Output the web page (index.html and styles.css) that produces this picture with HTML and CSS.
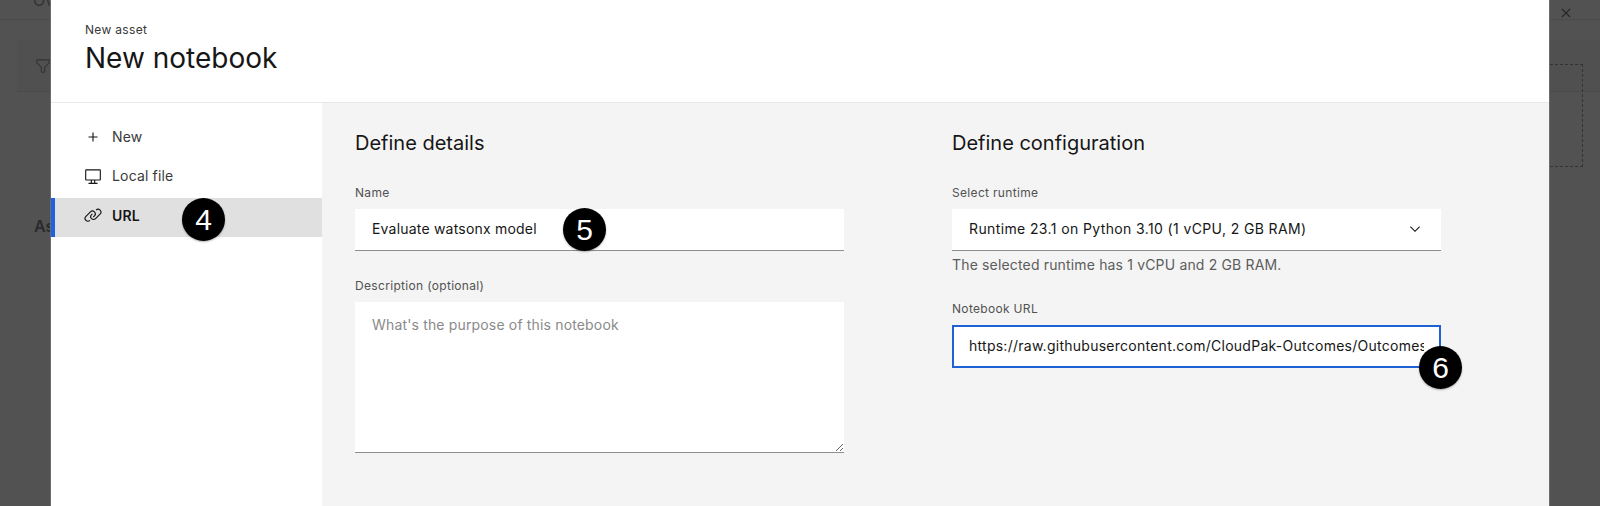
FILE: index.html
```html
<!DOCTYPE html>
<html lang="en">
<head>
<meta charset="utf-8">
<title>New notebook</title>
<link rel="stylesheet" href="styles.css">
</head>
<body>
<div class="backdrop">
  <div class="bg-tabs"><span class="bg-tab">Overview</span></div>
  <div class="bg-filter">
    <svg class="bg-filter-icon" viewBox="0 0 32 32" width="18" height="18"><path d="M18 28h-4a2 2 0 0 1-2-2v-7.59L4.59 11A2 2 0 0 1 4 9.59V6a2 2 0 0 1 2-2h20a2 2 0 0 1 2 2v3.59a2 2 0 0 1-.59 1.41L20 18.41V26a2 2 0 0 1-2 2zM6 6v3.59l8 8V26h4v-8.41l8-8V6z"/></svg>
  </div>
  <div class="bg-heading">Assets</div>
  <div class="bg-drop"></div>
  <svg class="bg-close" viewBox="0 0 32 32" width="18" height="18"><path d="M24 9.4L22.6 8 16 14.6 9.4 8 8 9.4l6.6 6.6L8 22.6 9.4 24l6.6-6.6 6.6 6.6 1.4-1.4-6.6-6.6z"/></svg>
</div>
<main class="modal">
  <header class="modal-head">
    <p class="eyebrow">New asset</p>
    <h1 class="title">New notebook</h1>
  </header>
  <div class="modal-body">
    <nav class="side">
      <a class="side-item">
        <svg class="side-icon" viewBox="0 0 32 32" width="18" height="18"><path d="M17 15V8h-2v7H8v2h7v7h2v-7h7v-2z"/></svg>
        <span>New</span>
      </a>
      <a class="side-item">
        <svg class="side-icon" viewBox="0 0 32 32" width="18" height="18"><path d="M28 4H4a2 2 0 0 0-2 2v16a2 2 0 0 0 2 2h8v4H8v2h16v-2h-4v-4h8a2 2 0 0 0 2-2V6a2 2 0 0 0-2-2zM18 28h-4v-4h4zm10-6H4V6h24z"/></svg>
        <span>Local file</span>
      </a>
      <a class="side-item is-active">
        <svg class="side-icon" viewBox="0 0 32 32" width="18" height="18"><path d="M29.25 6.76a6 6 0 0 0-8.5 0l1.42 1.42a4 4 0 1 1 5.67 5.67l-8 8a4 4 0 1 1-5.67-5.66l1.41-1.42-1.41-1.42-1.42 1.42a6 6 0 0 0 0 8.5A6 6 0 0 0 17 25a6 6 0 0 0 4.27-1.76l8-8a6 6 0 0 0-.02-8.48z"/><path d="M4.19 24.82a4 4 0 0 1 0-5.67l8-8a4 4 0 0 1 5.67 0A3.94 3.94 0 0 1 19 14a4 4 0 0 1-1.17 2.85L15.71 19l1.42 1.42 2.12-2.12a6 6 0 0 0-8.51-8.51l-8 8a6 6 0 0 0 0 8.51A6 6 0 0 0 7 28a6.07 6.07 0 0 0 4.28-1.76L9.86 24.82a4 4 0 0 1-5.67 0z"/></svg>
        <span>URL</span>
      </a>
    </nav>
    <section class="content">
      <div class="column">
        <h2 class="section-title">Define details</h2>
        <label class="field">
          <span class="field-label">Name</span>
          <input class="text-input" type="text" value="Evaluate watsonx model">
        </label>
        <label class="field field-desc">
          <span class="field-label">Description (optional)</span>
          <textarea class="text-area" placeholder="What's the purpose of this notebook"></textarea>
        </label>
      </div>
      <div class="column">
        <h2 class="section-title">Define configuration</h2>
        <div class="field">
          <span class="field-label">Select runtime</span>
          <div class="select-box">
            <span class="select-text">Runtime 23.1 on Python 3.10 (1 vCPU, 2 GB RAM)</span>
            <svg class="chevron" viewBox="0 0 32 32" width="16" height="16"><path d="M16 22L6 12l1.4-1.4 8.6 8.6 8.6-8.6L26 12z"/></svg>
          </div>
          <p class="helper">The selected runtime has 1 vCPU and 2 GB RAM.</p>
        </div>
        <label class="field field-url">
          <span class="field-label">Notebook URL</span>
          <span class="url-box"><input class="url-field" type="text" value="https://raw.githubusercontent.com/CloudPak-Outcomes/Outcomes-Projects/main/notebooks/evaluate.ipynb"></span>
        </label>
      </div>
    </section>
  </div>
</main>
<div class="badge badge-4">4</div>
<div class="badge badge-5">5</div>
<div class="badge badge-6">6</div>
</body>
</html>
```
FILE: styles.css
```css
* { box-sizing: border-box; }
html, body { margin: 0; height: 100%; }
body {
  position: relative;
  width: 1600px;
  height: 506px;
  overflow: hidden;
  font-family: "Inter", "Noto Sans", sans-serif;
  color: #161616;
  background: #525252;
}
.backdrop { position: absolute; inset: 0; overflow: hidden; }
.bg-tabs { display: flow-root; height: 20px; padding-left: 33px; border-bottom: 1px solid #4a4a4a; }
.bg-tab { display: block; font-size: 16px; line-height: 16px; margin-top: -8px; color: #333; }
.bg-filter { height: 52px; margin: 20px 0 0 17px; border-bottom: 1px solid #4a4a4a; background: #505050; display: flex; align-items: center; padding-left: 17px; }
.bg-filter-icon { fill: #333; }
.bg-heading { position: absolute; left: 34px; top: 216px; font-size: 16px; font-weight: 600; color: #2a2a2a; }
.bg-drop { position: absolute; left: 1500px; top: 64px; width: 83px; height: 103px; border: 1px dashed #333; }
.bg-close { position: absolute; left: 1557px; top: 4px; fill: #222; }
.modal {
  position: absolute;
  left: 51px;
  top: 0;
  width: 1498px;
  height: 506px;
  background: #fff;
  box-shadow: 0 0 0 1px #6c6c6c;
  display: flex;
  flex-direction: column;
}
.modal-head { height: 103px; padding: 22px 34px 0; border-bottom: 1px solid #e8e8e8; }
.eyebrow { margin: 0; font-size: 12px; line-height: 16px; color: #393939; letter-spacing: .32px; }
.title { margin: 2px 0 0; font-size: 28px; line-height: 36px; font-weight: 400; color: #161616; }
.modal-body { flex: 1; display: flex; min-height: 0; }
.side { width: 271px; padding-top: 14px; display: flex; flex-direction: column; }
.side-item {
  height: 39px;
  display: flex;
  align-items: center;
  padding-left: 33px;
  font-size: 14px;
  letter-spacing: .16px;
  color: #393939;
  gap: 10px;
}
.side-icon { fill: #161616; flex: none; }
.is-active { margin-top: 3px; padding-bottom: 5px; background: #e0e0e0; border-left: 4px solid #1f62e0; padding-left: 29px; font-weight: 600; color: #161616; }
.content { flex: 1; background: #f4f4f4; padding: 26px 33px 0; display: grid; grid-template-columns: 489px 489px; column-gap: 108px; }
.column { display: flex; flex-direction: column; }
.section-title { margin: 0; font-size: 20px; line-height: 28px; font-weight: 400; color: #161616; }
.field { display: flex; flex-direction: column; margin-top: 28px; }
.field-label { font-size: 12px; line-height: 16px; letter-spacing: .32px; color: #525252; margin-bottom: 8px; }
.text-input, .select-box {
  height: 42px;
  width: 100%;
  border: 0;
  border-bottom: 1px solid #8d8d8d;
  background: #fff;
  padding: 0 17px 2px;
  font: inherit;
  font-size: 14px;
  letter-spacing: .2px;
  color: #161616;
  outline: 0;
  border-radius: 0;
}
.select-box { display: flex; align-items: center; justify-content: space-between; padding-right: 18px; }
.select-text { letter-spacing: .38px; }
.chevron { fill: #161616; }
.helper { margin: 4px 0 0; font-size: 14px; line-height: 20px; letter-spacing: .16px; color: #5c5c5c; }
.field-desc { margin-top: 27px; }
.text-area {
  display: block;
  width: 100%;
  height: 151px;
  border: 0;
  border-bottom: 1px solid #8d8d8d;
  background: #fff;
  padding: 13px 17px;
  font: inherit;
  font-size: 14px;
  line-height: 20px;
  letter-spacing: .16px;
  color: #161616;
  outline: 0;
  border-radius: 0;
}
.text-area::placeholder { color: #8a8a8a; opacity: 1; }
.field-url { margin-top: 26px; }
.url-box { display: block; height: 43px; border: 2px solid #1f62d6; background: #fff; padding: 0 15px 2px; }
.url-field {
  display: block;
  width: 100%;
  height: 100%;
  border: 0;
  padding: 0;
  background: transparent;
  font: inherit;
  font-size: 14px;
  letter-spacing: .26px;
  color: #161616;
  outline: 0;
}
.badge {
  position: absolute;
  width: 43px;
  height: 43px;
  border-radius: 50%;
  background: #000;
  color: #fff;
  display: flex;
  align-items: center;
  justify-content: center;
  font-family: "Liberation Sans", sans-serif;
  font-size: 30px;
  box-shadow: 0 1px 2px rgba(0,0,0,.3);
}
.badge-4 { left: 182px; top: 198px; }
.badge-5 { left: 563px; top: 208px; }
.badge-6 { left: 1419px; top: 346px; }
```
